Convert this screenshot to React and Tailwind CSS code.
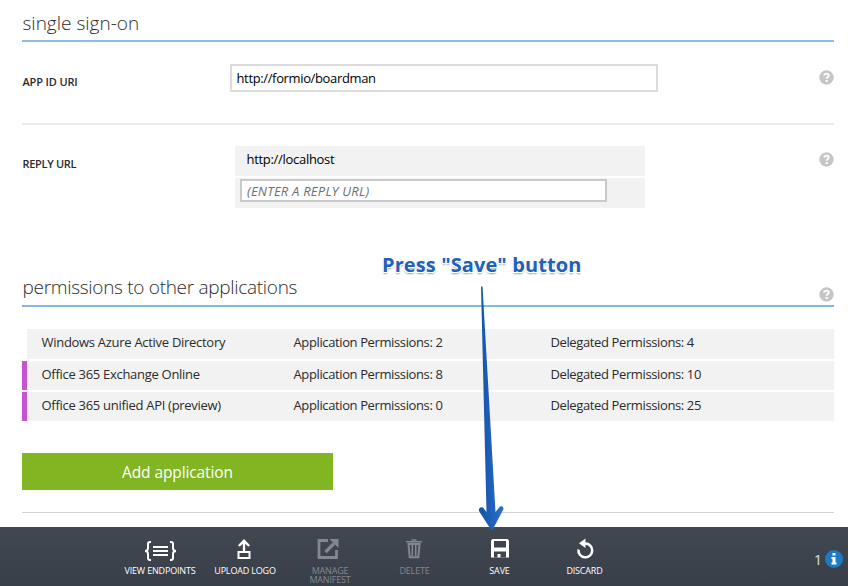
import React from "react";

function Help() {
  return (
    <svg className="block h-[15px] w-[15px] shrink-0" viewBox="0 0 15 15">
      <circle cx="7.5" cy="7.5" r="7.2" fill="#c6c6c6" />
      <path d="M5.200 5.600C5.300 4 6.200 3.600 7.500 3.600c1.400 0 2.200.7 2.200 1.800 0 1.500-2 1.600-2 3.400" fill="none" stroke="#fff" strokeWidth="1.900" />
      <rect x="6.700" y="10" width="2" height="2" fill="#fff" />
    </svg>
  );
}

const permissions = [
  { name: "Windows Azure Active Directory", app: 2, delegated: 4, size: "h-[30px]", bar: "bg-transparent" },
  { name: "Office 365 Exchange Online", app: 8, delegated: 10, size: "h-[29px]", bar: "bg-[#c553d4]" },
  { name: "Office 365 unified API (preview)", app: 0, delegated: 25, size: "h-[29px]", bar: "bg-[#c553d4]" },
];

function Command({ width, label, disabled, children }) {
  return (
    <div className={`flex shrink-0 flex-col items-center ${width} ${disabled ? "text-[#83888e]" : "text-white"}`}>
      <svg className="mt-[10px] block h-6 w-8" viewBox="0 0 32 24" fill="none" stroke="currentColor">
        {children}
      </svg>
      <div className="mt-[5px] whitespace-pre text-center text-[9px] leading-[9px] font-medium tracking-[-0.18px]">{label}</div>
    </div>
  );
}

export default function App() {
  return (
    <div className="relative flex h-[586px] w-[848px] flex-col overflow-hidden bg-white font-['Open_Sans','Noto_Sans',sans-serif] text-[#2b2b2b]">
      <main className="ml-[22px] flex h-[527px] w-[812px] flex-col">
        <h2 className="h-[42px] border-b-2 border-[#8ebbe2] pt-[10px] pl-[0.5px] text-[19px] leading-[26px] font-light">
          single sign-on
        </h2>

        <div className="flex h-[83px] border-b-2 border-[#ebebeb]">
          <div className="w-[208px] pt-[32px] pl-[0.5px] text-[11px] leading-[15px] font-semibold tracking-[-0.15px]">APP ID URI</div>
          <div className="mt-[22px] flex h-[28px] w-[428px] items-center border-2 border-[#dcdcdc] px-[4.5px] pt-[2px] text-[13px] tracking-[-0.36px] text-black">
            http://formio/boardman
          </div>
          <div className="mt-[28px] ml-auto"><Help /></div>
        </div>

        <div className="flex h-[149px]">
          <div className="w-[213px] pt-[31px] pl-[0.5px] text-[11px] leading-[15px] font-semibold tracking-[-0.3px]">REPLY URL</div>
          <div className="mt-[21px] flex w-[410px] flex-col gap-[2px]">
            <div className="h-[30px] bg-[#f2f2f2] pl-[11.5px] text-[13px] leading-[27px] tracking-[-0.3px] text-black">http://localhost</div>
            <div className="h-[30px] bg-[#f2f2f2] pt-[1px] pl-[5px]">
              <div className="flex h-[23px] w-[367px] items-center border-2 border-[#c9c9c9] bg-white px-[5px] pt-[2px] text-[13px] tracking-[0.22px] text-[#707070] italic">
                (ENTER A REPLY URL)
              </div>
            </div>
          </div>
          <div className="mt-[27px] ml-auto"><Help /></div>
        </div>

        <div className="flex h-[33px] justify-between border-b-2 border-[#84b7e4]">
          <h2 className="pl-[0.5px] text-[19px] leading-[27px] font-light tracking-[-0.3px]">permissions to other applications</h2>
          <div className="mt-[13px]"><Help /></div>
        </div>

        <div className="mt-[22px] flex flex-col gap-[2px] text-[13px] leading-[27px] tracking-[-0.29px]">
          {permissions.map((p) => (
            <div key={p.name} className={`flex ${p.size}`}>
              <div className={`w-[5px] ${p.bar}`} />
              <div className="flex flex-1 bg-[#f2f2f2] pl-[14.5px]">
                <div className="w-[252px]">{p.name}</div>
                <div className="w-[257px] tracking-[-0.38px]">Application Permissions: {p.app}</div>
                <div className="tracking-[-0.38px]">Delegated Permissions: {p.delegated}</div>
              </div>
            </div>
          ))}
        </div>

        <button className="mt-8 h-[37px] w-[311px] bg-[#81b622] pt-[2px] text-[15.5px] tracking-[-0.1px] text-white">Add application</button>
        <div className="mt-[22px] h-px bg-[#d5d5d5]" />
      </main>

      <footer className="flex h-[59px] bg-linear-to-b from-[#414851] to-[#383f49] pl-[116px]">
        <Command width="w-[88px]" label="VIEW ENDPOINTS">
          <g strokeWidth="2">
            <path d="M7 5H6Q4 5 4 7V11Q4 14 1 14Q4 14 4 17V21Q4 23 6 23H7" />
            <path d="M26 5H27Q29 5 29 7V11Q29 14 32 14Q29 14 29 17V21Q29 23 27 23H26" />
            <path d="M9 10H24M9 14H24M9 18H24" />
          </g>
        </Command>
        <Command width="w-[82px]" label="UPLOAD LOGO">
          <rect x="9.500" y="15" width="11" height="6" strokeWidth="2" />
          <path d="M15 14V4M9.800 9L15 3.800L20.200 9" strokeWidth="2.400" />
        </Command>
        <Command width="w-[88px]" label={"MANAGE\nMANIFEST"} disabled>
          <path d="M14 3.500H5V20.500H22.500V13" strokeWidth="2.800" />
          <path d="M11.500 15L20 6.500" strokeWidth="3.200" />
          <path d="M15.500 2H24.500V11Z" fill="currentColor" stroke="none" />
        </Command>
        <Command width="w-[81px]" label="DELETE" disabled>
          <path d="M7 4.800H23M12.500 3H17.500" strokeWidth="1.500" />
          <path d="M9.500 7L10.700 20.300H19.300L20.500 7Z" strokeWidth="2" />
          <path d="M13.300 8V19M16.700 8V19" strokeWidth="1.600" />
        </Command>
        <Command width="w-[89px]" label="SAVE">
          <path d="M8.500 2H23.500L25 3.500V20.500H7V3.500Z" fill="currentColor" stroke="none" />
          <rect x="10" y="4" width="12" height="6.500" fill="#3e454e" stroke="none" />
          <path d="M10 20.500V14.500H22V20.500H16.500V17H13.500V20.500Z" fill="#3e454e" stroke="none" />
        </Command>
        <Command width="w-[81px]" label="DISCARD">
          <path d="M9.500 12.500A6.900 6.900 0 1 0 16.300 6.500H13" strokeWidth="2.500" />
          <path d="M16.500 1.500V11L10 6.200Z" fill="currentColor" stroke="none" />
        </Command>
        <div className="ml-auto flex h-[64px] items-center gap-[3px] pr-[5px]">
          <span className="text-[14px] text-[#e0e0e0]">1</span>
          <svg className="block h-[18px] w-[18px]" viewBox="0 0 18 18">
            <circle cx="9" cy="9" r="9" fill="#1f7ac4" />
            <path d="M7.500 3H10.500V5.500H7.500ZM6.500 7H10.500V12.500H11.500V14.500H6.500V12.500H7.500V9H6.500Z" fill="#fff" />
          </svg>
        </div>
      </footer>

      <div className="absolute top-[251px] left-[382px] text-[20px] leading-[27px] font-bold tracking-[0.1px] whitespace-nowrap text-[#2062b8] [text-shadow:0_0_1px_#fff,1px_1px_0_#fff,-1px_1px_0_#fff,0_2px_2px_#999]">
        Press "Save" button
      </div>
      <svg className="absolute top-[280px] left-[470px] h-[255px] w-[45px]" viewBox="470 280 45 255">
        <defs>
          <linearGradient id="arrow" x1="0" x2="1">
            <stop offset="0" stopColor="#1352a6" />
            <stop offset="1" stopColor="#2b70ca" />
          </linearGradient>
        </defs>
        <path d="M481 286.500H482.500L495.500 512L500 506.500Q503.500 505.500 503.500 509L493 529Q492 531.500 490.500 529L479 511Q478.500 506.500 483 507.500L486.500 512Z" fill="url(#arrow)" />
      </svg>
    </div>
  );
}
